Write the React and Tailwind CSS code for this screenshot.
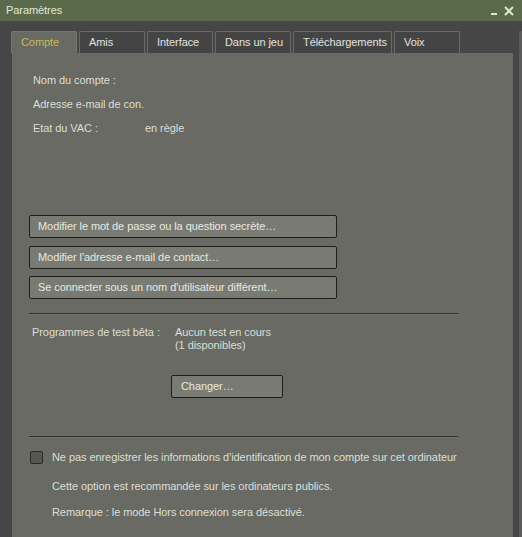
import React from "react";

const tabs = [
  { label: "Compte", w: "w-[66px]", active: true },
  { label: "Amis", w: "w-[66px]" },
  { label: "Interface", w: "w-[66px]" },
  { label: "Dans un jeu", w: "w-[76px]" },
  { label: "Téléchargements", w: "w-[99px]" },
  { label: "Voix", w: "w-[66px]" },
];

function Btn({ children, className = "" }) {
  return (
    <div
      className={
        "h-[23px] flex items-center pl-[8px] bg-[#797b73] border border-[#1e1f1c] rounded-[2px] text-[#e6e8e0] " +
        className
      }
    >
      {children}
    </div>
  );
}

export default function App() {
  return (
    <div
      className="w-[522px] h-[537px] bg-[#464646] flex flex-col overflow-hidden text-[11px] leading-[13px] tracking-[-0.07px] text-[#dcdfd6]"
      style={{ fontFamily: '"Liberation Sans", Arial, sans-serif' }}
    >
      {/* Title bar */}
      <div className="h-[21px] bg-[#5b6a4b] flex items-center justify-between pl-[6px] pr-[8px] shrink-0">
        <span className="text-[#e2e8d8]">Paramètres</span>
        <div className="flex items-center gap-[6px]">
          <svg width="8" height="10" viewBox="0 0 8 10">
            <rect x="1" y="7" width="6" height="2" fill="#dfe6d4" />
          </svg>
          <svg width="10" height="10" viewBox="0 0 10 10">
            <path d="M1 1 L9 9 M9 1 L1 9" stroke="#dfe6d4" strokeWidth="2" />
          </svg>
        </div>
      </div>

      <div className="flex-1 flex">
        <div className="flex-1 flex flex-col">
          {/* Tabs */}
          <div className="flex gap-[2px] pl-[11px] pt-[10px] shrink-0">
            {tabs.map((t) => (
              <div
                key={t.label}
                className={
                  t.w +
                  " h-[22px] flex items-center pl-[9px] border-t border-l border-r rounded-t-[2px] " +
                  (t.active
                    ? "bg-[#686a63] border-[#74766f] text-[#c9bb55]"
                    : "bg-[#444444] border-[#6a6a6a] text-[#e2e2e0]")
                }
              >
                {t.label}
              </div>
            ))}
          </div>

          {/* Panel */}
          <div className="ml-[12px] w-[501px] flex-1 bg-[#686a63] flex flex-col pl-[17px]">
            <div className="pl-[4px] mt-[21px]">Nom du compte :</div>
            <div className="pl-[4px] mt-[11px]">Adresse e-mail de con.</div>
            <div className="pl-[4px] mt-[11px] flex">
              <span className="w-[112px]">Etat du VAC :</span>
              <span>en règle</span>
            </div>

            <div className="w-[308px] mt-[80px] flex flex-col">
              <Btn>Modifier le mot de passe ou la question secrète…</Btn>
              <Btn className="mt-[8px]">Modifier l'adresse e-mail de contact…</Btn>
              <Btn className="mt-[7px]">Se connecter sous un nom d'utilisateur différent…</Btn>
            </div>

            <div className="w-[429px] mt-[14px] h-[2px] border-t border-[#2e2f2b] border-b border-b-[#73756e]" />

            <div className="pl-[3px] mt-[11px] flex">
              <span className="w-[143px]">Programmes de test bêta :</span>
              <div className="flex flex-col">
                <span>Aucun test en cours</span>
                <span>(1 disponibles)</span>
              </div>
            </div>

            <div className="ml-[142px] w-[112px] mt-[23px]">
              <Btn className="pl-[9px]">Changer…</Btn>
            </div>

            <div className="w-[429px] mt-[38px] h-[2px] border-t border-[#2e2f2b] border-b border-b-[#73756e]" />

            <div className="mt-[13px] flex items-center">
              <div className="w-[13px] h-[13px] ml-[1px] bg-[#56584f] border border-[#2a2b27] rounded-[2px]" />
              <span className="ml-[9px]">
                Ne pas enregistrer les informations d'identification de mon compte sur cet ordinateur
              </span>
            </div>
            <div className="pl-[23px] mt-[16px]">Cette option est recommandée sur les ordinateurs publics.</div>
            <div className="pl-[23px] mt-[13px]">Remarque : le mode Hors connexion sera désactivé.</div>
          </div>
        </div>
        {/* right edge */}
        <div className="w-[9px] flex">
          <div className="w-[6px] bg-[#464646]" />
          <div className="w-[3px] bg-[#5a5a5a] mt-[10px]" />
        </div>
      </div>
    </div>
  );
}
